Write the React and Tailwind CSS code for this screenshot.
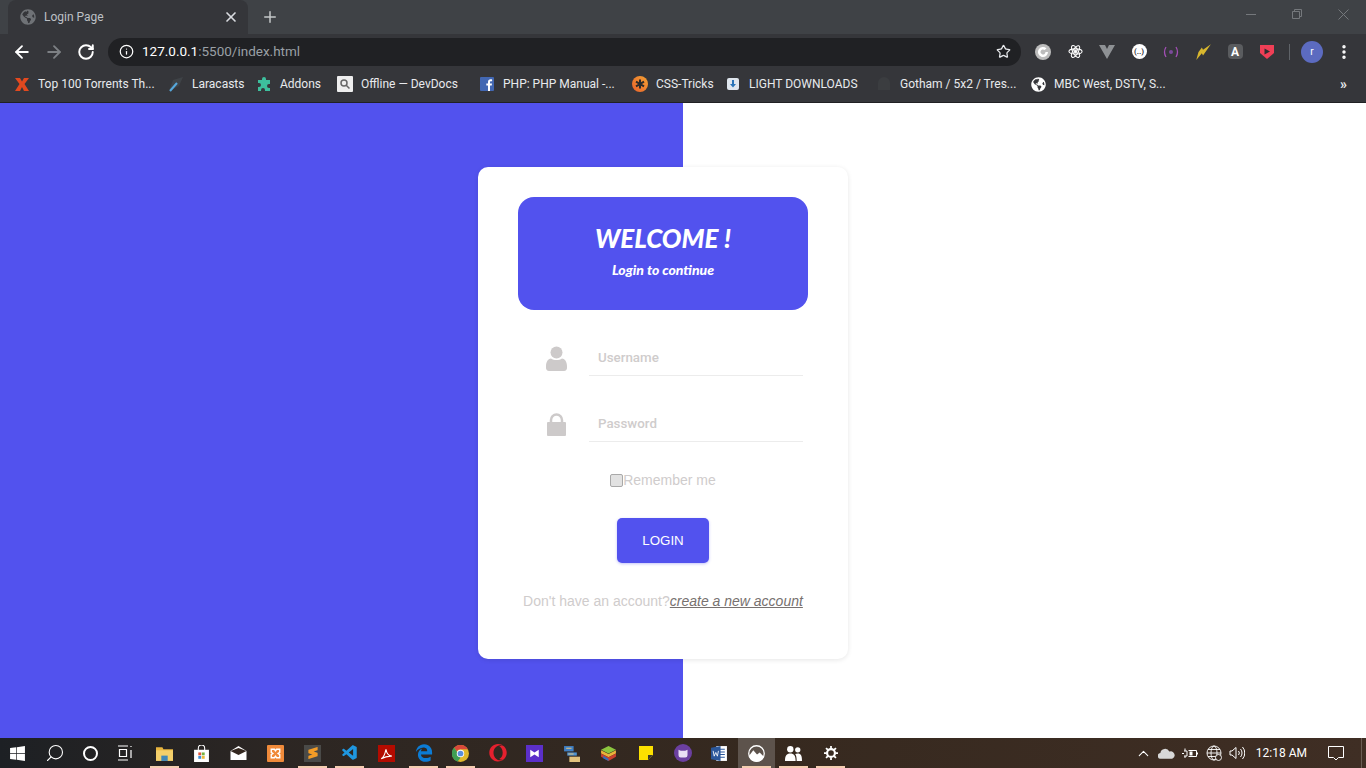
import { FaChrome, FaEdgeLegacy, FaGlobeAmericas, FaOpera, FaWindows } from 'react-icons/fa';
import { SiSublimetext } from 'react-icons/si';
import { VscVscode } from 'react-icons/vsc';
import { ArrowLeft, ArrowRight, ChevronUp, Info, MoreVertical, Plus, RotateCw, Search, Star, X } from 'lucide-react';

function XMark() {
  return (
    <svg viewBox="0 0 16 16" className="h-4 w-4">
      <path d="M1 2h5l2 3.500L10 2h5l-4.500 6 4.500 7H10l-2-4-2 4H1l4.500-7z" fill="#e2491f" />
    </svg>
  );
}

function Laracasts() {
  return (
    <svg viewBox="0 0 16 16" className="h-4 w-4">
      <path d="M15 1 5 4l-1 3-3 8 8-4 2-1z" fill="#3f4347" />
      <path d="M2 15 9 7" stroke="#56a8dc" strokeWidth="2" />
    </svg>
  );
}

function Puzzle() {
  return (
    <svg viewBox="0 0 16 16" className="h-4 w-4">
      <path d="M6 3a2 2 0 1 1 4 0v1h4v4h-1a2 2 0 1 0 0 4h1v3H9v-1a2 2 0 1 0-4 0v1H2v-4h1a2 2 0 1 0 0-4H2V4h4z" fill="#3dbf9d" />
    </svg>
  );
}

function DevDocs() {
  return (
    <svg viewBox="0 0 16 16" className="h-4 w-4">
      <rect width="16" height="16" rx="1" fill="#eeeeee" />
      <circle cx="7" cy="7" r="3" fill="none" stroke="#666" strokeWidth="1.500" />
      <path d="m9 9 3.500 3.500" stroke="#666" strokeWidth="1.500" />
    </svg>
  );
}

function Facebook() {
  return (
    <svg viewBox="0 0 16 16" className="h-4 w-4">
      <rect x="1" y="1" width="14" height="14" rx="1" fill="#4267b2" />
      <path d="M11 15V9.500h1.700l.3-2h-2V6.200c0-.6.2-1 1-1h1.100V3.400C12.700 3.300 12.200 3.300 11.600 3.300 10 3.300 9 4.200 9 6v1.500H7.300v2H9V15z" fill="#fff" />
    </svg>
  );
}

function CssTricks() {
  return (
    <svg viewBox="0 0 16 16" className="h-4 w-4">
      <defs>
        <linearGradient id="cssTricksFill" x1="0" y1="1" x2="1" y2="0">
          <stop offset="0" stopColor="#e8612c" />
          <stop offset="1" stopColor="#f4a233" />
        </linearGradient>
      </defs>
      <circle cx="8" cy="8" r="8" fill="url(#cssTricksFill)" />
      <path d="M8 3.500v9M4 5.700l8 4.600M12 5.700l-8 4.600" stroke="#2b2b2b" strokeWidth="2" />
    </svg>
  );
}

function Download() {
  return (
    <svg viewBox="0 0 12 12" className="h-3 w-3">
      <rect width="12" height="12" rx="2" fill="#dfe6ee" />
      <path d="M5 2h2v4h2L6 9.500 3 6h2z" fill="#2b74b8" />
    </svg>
  );
}

function Ghost() {
  return (
    <svg viewBox="0 0 16 16" className="h-4 w-4">
      <path d="M2 14V7a6 6 0 0 1 12 0v7z" fill="#3b3d40" />
    </svg>
  );
}

function Chrome() {
  return (
    <svg viewBox="0 0 16 16" className="h-[17px] w-[17px]">
      <circle cx="8" cy="8" r="8" fill="#e0b92c" />
      <path d="M8 0a8 8 0 0 1 7 4H8a4 4 0 0 0-3.500 2L2 2.300A8 8 0 0 1 8 0z" fill="#d9483b" />
      <path d="M2 2.300 4.500 6 8 12l-2.700 3.500A8 8 0 0 1 2 2.300z" fill="#3f9d53" />
      <circle cx="8" cy="8" r="3.500" fill="#fff" />
      <circle cx="8" cy="8" r="2.700" fill="#5a8fdc" />
    </svg>
  );
}

const bookmarks = [
  { label: 'Top 100 Torrents Th...', item: 'ml-[14px]', text: 'w-[114px]', icon: <XMark /> },
  { label: 'Laracasts', item: 'ml-[16px]', text: 'w-[48px]', icon: <Laracasts /> },
  { label: 'Addons', item: 'ml-[16px]', text: 'w-[41px]', icon: <Puzzle /> },
  { label: 'Offline — DevDocs', item: 'ml-[16px]', text: 'w-[101px]', icon: <DevDocs /> },
  { label: 'PHP: PHP Manual -...', item: 'ml-[17px]', text: 'w-[110px]', icon: <Facebook /> },
  { label: 'CSS-Tricks', item: 'ml-[19px]', text: 'w-[54px]', icon: <CssTricks /> },
  { label: 'LIGHT DOWNLOADS', item: 'ml-[15px]', text: 'w-[110px]', icon: <Download /> },
  { label: 'Gotham / 5x2 / Tres...', item: 'ml-[17px]', text: 'w-[113px]', icon: <Ghost /> },
  { label: 'MBC West, DSTV, S...', item: 'ml-[17px]', text: 'w-[110px]', icon: <FaGlobeAmericas className="h-[15px] w-[15px] text-white" /> },
];

const apps = [
  { on: true, icon: (
    <svg viewBox="0 0 16 16" className="h-[17px] w-[17px]">
      <path d="M0 2h6l1 2h9v2H0z" fill="#e8b53f" />
      <path d="M0 5h16v10H0z" fill="#f3cf6a" />
      <path d="M5 10h6v5H5z" fill="#3f87b8" />
    </svg>
  ) },
  { on: false, icon: (
    <svg viewBox="0 0 16 16" className="h-[17px] w-[17px]">
      <path d="M5 5V3a3 3 0 0 1 6 0v2" fill="none" stroke="#fff" />
      <path d="M1 4.500h14V16H1z" fill="#fff" />
      <path d="M5 7h2.700v2.700H5z" fill="#e0543a" />
      <path d="M8.300 7H11v2.700H8.300z" fill="#75b23f" />
      <path d="M5 10.300h2.700V13H5z" fill="#3a8ed8" />
      <path d="M8.300 10.300H11V13H8.300z" fill="#edb93a" />
    </svg>
  ) },
  { on: false, icon: (
    <svg viewBox="0 0 16 14" className="h-[14px] w-[17px]">
      <path d="M0 5 8 0l8 5v9H0z" fill="#fff" />
      <path d="M0 5 8 9l8-4-8-3z" fill="#33271f" />
    </svg>
  ) },
  { on: false, icon: (
    <svg viewBox="0 0 16 16" className="h-[17px] w-[17px]">
      <rect width="16" height="16" rx="1" fill="#f08a3a" />
      <path d="M4 4h3l1 1.500L9 4h3v3l-1.500 1L12 9v3H9L8 10.500 7 12H4V9l1.500-1L4 7z" fill="none" stroke="#fff" strokeWidth="1.300" />
    </svg>
  ) },
  { on: true, icon: (
    <div className="flex h-[17px] w-[17px] items-center justify-center bg-[#4a4a48]">
      <SiSublimetext className="h-3 w-3 text-[#f39c27]" />
    </div>
  ) },
  { on: true, icon: <VscVscode className="h-[18px] w-[18px] text-[#1f97e0]" /> },
  { on: false, icon: (
    <svg viewBox="0 0 16 16" className="h-[17px] w-[17px]">
      <rect width="16" height="16" fill="#b30b00" />
      <path d="M3 13c2-1 3.500-4 4.500-9 .5 4 2 6 5.500 6.500-3.500-.2-7 .8-10 2.500z" fill="none" stroke="#fff" strokeWidth="1.100" />
    </svg>
  ) },
  { on: true, icon: <FaEdgeLegacy className="h-[18px] w-[18px] text-[#0c7cd5]" /> },
  { on: true, icon: <Chrome /> },
  { on: false, icon: <FaOpera className="h-[18px] w-[18px] text-[#e5202e]" /> },
  { on: false, icon: (
    <svg viewBox="0 0 16 16" className="h-[17px] w-[17px]">
      <rect width="16" height="16" fill="#5b2fc9" />
      <path d="M4 4.500 8 7l4-2.500v7L8 9l-4 2.500z" fill="#fff" />
    </svg>
  ) },
  { on: false, icon: (
    <svg viewBox="0 0 16 16" className="h-[17px] w-[17px]">
      <path d="M1 1h9v5H1z" fill="#3f7fc4" />
      <path d="M4 7h9v3H4z" fill="#4f93d2" />
      <path d="M6 11h10v5H6z" fill="#e3c27d" />
      <path d="M3 3h5M5 8.500h5" stroke="#e3c27d" />
    </svg>
  ) },
  { on: false, icon: (
    <svg viewBox="0 0 16 16" className="h-[17px] w-[17px]">
      <path d="M8 1 15 4.500 8 8 1 4.500z" fill="#8cc63f" />
      <path d="M1 5v3l7 3.500L15 8V5L8 8.500z" fill="#e8b33a" />
      <path d="M1 8v3l7 4 7-4V8l-7 3.500z" fill="#c8402e" />
      <path d="M3 10v2.500L8 15v-2z" fill="#2f6fc0" />
    </svg>
  ) },
  { on: false, icon: (
    <svg viewBox="0 0 16 16" className="h-[16px] w-[16px]">
      <path d="M1 1h14v9l-5 5H1z" fill="#fce100" />
      <path d="M15 10h-5v5z" fill="#3a3a2a" />
    </svg>
  ) },
  { on: false, icon: (
    <svg viewBox="0 0 16 16" className="h-[18px] w-[18px]">
      <circle cx="8" cy="8" r="8" fill="#6b3fa0" />
      <path d="M4 5l2 1h4l2-1v5a2 2 0 0 1-2 2H6a2 2 0 0 1-2-2z" fill="#e8def5" />
    </svg>
  ) },
  { on: false, icon: (
    <svg viewBox="0 0 16 16" className="h-[17px] w-[17px]">
      <path d="M5 1h10v14H5z" fill="#fff" />
      <path d="M8 4h5M8 6.500h5M8 9h5M8 11.500h5" stroke="#2b579a" />
      <path d="M0 2.500 9 1v14l-9-1.500z" fill="#2b579a" />
      <path d="m2 5.500 1 5 1.500-3.500L6 10.500l1-5" fill="none" stroke="#fff" strokeWidth=".8" />
    </svg>
  ) },
  { on: true, active: true, icon: (
    <svg viewBox="0 0 16 16" className="h-[17px] w-[17px]">
      <circle cx="8" cy="8" r="7.300" fill="none" stroke="#fff" strokeWidth="1.200" />
      <path d="M1 10 5 5l3.500 4L11 7l4 4a7.300 7.300 0 0 1-14-1z" fill="#fff" />
    </svg>
  ) },
  { on: true, icon: (
    <svg viewBox="0 0 16 16" className="h-[17px] w-[17px]">
      <circle cx="5" cy="4" r="3" fill="#fff" />
      <circle cx="12" cy="4.500" r="2.500" fill="#fff" />
      <path d="M0 15c0-5 1.500-7 5-7s5 2 5 7zM11 15c0-3-.4-5-1.400-6.500 .7-.3 1.500-.5 2.400-.5 3 0 4 2 4 7z" fill="#fff" />
    </svg>
  ) },
  { on: true, icon: (
    <svg viewBox="0 0 16 16" className="h-[14px] w-[14px]">
      <circle cx="8" cy="8" r="4.500" fill="none" stroke="#fff" strokeWidth="2.500" />
      <path d="M8 0v3M8 13v3M0 8h3M13 8h3M2.300 2.300l2.200 2.200M11.500 11.500l2.200 2.200M13.700 2.300l-2.200 2.200M4.500 11.500l-2.200 2.200" stroke="#fff" strokeWidth="2" />
    </svg>
  ) },
];

const ToolbarCell = ({ children }) => (
  <div className="flex h-8 w-8 shrink-0 items-center justify-center">{children}</div>
);

const TrayCell = ({ children }) => (
  <div className="flex h-full w-[23.5px] shrink-0 items-center justify-center">{children}</div>
);

const BrowserChrome = () => (
  <header className="shrink-0 font-['Roboto','Noto_Sans',sans-serif]">
    {/* Tab strip */}
    <div className="flex h-[34px] bg-[#3f4246] pl-2">
      <div className="flex h-full w-[240px] items-center rounded-t-lg bg-[#35363a] pl-3 pr-[9px]">
        <FaGlobeAmericas className="h-4 w-4 shrink-0 text-[#6f7276]" />
        <span className="ml-2 flex-1 text-xs text-[#bdc1c6]">Login Page</span>
        <X className="h-4 w-4 text-[#dadce0]" strokeWidth={2.500} />
      </div>
      <div className="ml-[13px] flex items-center">
        <Plus className="h-[18px] w-[18px] text-[#c4c7c9]" strokeWidth={2} />
      </div>
      {/* Window buttons */}
      <div className="ml-auto flex h-full items-center pb-[6px] text-[#75787c]">
        <div className="flex w-[46px] justify-center">
          <div className="h-px w-[10px] bg-[#75787c]" />
        </div>
        <div className="flex w-[46px] justify-center">
          <svg viewBox="0 0 10 10" className="h-[10px] w-[10px]" fill="none" stroke="currentColor">
            <path d="M.5 2.500h7v7h-7zM2.500 2.500v-2h7v7h-2" />
          </svg>
        </div>
        <div className="flex w-[46px] justify-center">
          <svg viewBox="0 0 11 11" className="h-[11px] w-[11px]" fill="none" stroke="currentColor">
            <path d="m.5.500 10 10M10.500.500l-10 10" />
          </svg>
        </div>
      </div>
    </div>

    {/* Toolbar */}
    <div className="flex h-[35px] items-center bg-[#35363a] pl-[6px]">
      <ToolbarCell><ArrowLeft className="h-5 w-5 text-white" strokeWidth={2.200} /></ToolbarCell>
      <ToolbarCell><ArrowRight className="h-5 w-5 text-[#7d8084]" strokeWidth={2.200} /></ToolbarCell>
      <ToolbarCell><RotateCw className="h-[18px] w-[18px] text-white" strokeWidth={2.600} /></ToolbarCell>
      <div className="ml-[6px] flex h-7 w-[913px] items-center rounded-full bg-[#202124] pl-[11px] pr-[10px]">
        <Info className="h-[15px] w-[15px] text-white" strokeWidth={2} />
        <span className="ml-[8px] flex-1 text-[13.5px] text-[#9aa0a6]">
          <span className="text-white">127.0.0.1</span>:5500/index.html
        </span>
        <Star className="h-[15px] w-[15px] text-[#e8eaed]" strokeWidth={2} />
      </div>
      <div className="ml-[6px] flex items-center">
        <ToolbarCell>
          <svg viewBox="0 0 16 16" className="h-4 w-4">
            <circle cx="8" cy="8" r="8" fill="#bdbdbd" />
            <path d="M11.500 4.500A5 5 0 1 0 13 8h-2.500A2.500 2.500 0 1 1 9.500 6z" fill="#fff" />
          </svg>
        </ToolbarCell>
        <ToolbarCell>
          <svg viewBox="0 0 16 16" className="h-[15px] w-[15px]" fill="none" stroke="#fff" strokeWidth="1.100">
            <ellipse cx="8" cy="8" rx="7" ry="2.800" />
            <ellipse cx="8" cy="8" rx="7" ry="2.800" transform="rotate(60 8 8)" />
            <ellipse cx="8" cy="8" rx="7" ry="2.800" transform="rotate(120 8 8)" />
            <circle cx="8" cy="8" r="1.300" fill="#fff" />
          </svg>
        </ToolbarCell>
        <ToolbarCell>
          <svg viewBox="0 0 16 14" className="h-[14px] w-[16px]">
            <path d="M0 0h6l2 4 2-4h6L8 14z" fill="#8e9194" />
          </svg>
        </ToolbarCell>
        <ToolbarCell>
          <div className="flex h-[15px] w-[15px] items-center justify-center rounded-full bg-white text-[8px] font-bold leading-none text-[#35363a]">
            {'(..)'}
          </div>
        </ToolbarCell>
        <ToolbarCell>
          <svg viewBox="0 0 16 12" className="h-3 w-4" fill="none" stroke="#a24fb5" strokeWidth="1.300">
            <path d="M3 1Q0 6 3 11M13 1q3 5 0 10" />
            <circle cx="8" cy="6" r="2" fill="#7a4a9a" stroke="none" />
          </svg>
        </ToolbarCell>
        <ToolbarCell>
          <svg viewBox="0 0 16 16" className="h-[18px] w-[18px]">
            <path d="M15 1 8 6l-1-2-3 4-2 7 5-6 1 2z" fill="#d8b72e" />
          </svg>
        </ToolbarCell>
        <ToolbarCell>
          <div className="flex h-[15px] w-[15px] items-center justify-center rounded-sm bg-[#5a5c5f] text-[12px] font-bold leading-none text-white">
            A
          </div>
        </ToolbarCell>
        <ToolbarCell>
          <svg viewBox="0 0 16 16" className="h-4 w-4">
            <path d="M1 1h14v8l-7 6-7-6z" fill="#ef3f56" />
            <path d="M5.500 4.500 11 7.500l-5.500 3z" fill="#2e2e30" />
          </svg>
        </ToolbarCell>
      </div>
      <div className="ml-[6px] h-4 w-px bg-[#5f6368]" />
      <div className="ml-[6px] flex h-8 w-8 items-center justify-center">
        <div className="flex h-[22px] w-[22px] items-center justify-center rounded-full bg-[#5c6bc0] text-[10px] text-white">
          r
        </div>
      </div>
      <ToolbarCell><MoreVertical className="h-[18px] w-[18px] text-white" strokeWidth={2.600} /></ToolbarCell>
    </div>

    {/* Bookmarks bar */}
    <div className="flex h-[34px] items-center border-b border-[#202124] bg-[#35363a] pb-[3px]">
      {bookmarks.map((b) => (
        <div key={b.label} className={`flex shrink-0 items-center ${b.item}`}>
          <div className="flex w-4 shrink-0 justify-center">{b.icon}</div>
          <span className={`ml-2 whitespace-nowrap text-xs text-[#e8eaed] ${b.text}`}>{b.label}</span>
        </div>
      ))}
      <span className="ml-auto mr-[19px] text-sm font-bold leading-none text-[#e8eaed]">»</span>
    </div>
  </header>
);

const UserIcon = () => (
  <svg viewBox="0 0 21 25" className="h-[25px] w-[21px]" fill="#cdcaca">
    <circle cx="10.500" cy="6.500" r="6" />
    <path d="M0 20c0-4.500 2.500-7.500 5-7.500 1.500 1 3.500 1.500 5.500 1.500s4-.5 5.500-1.500c2.500 0 5 3 5 7.500v2c0 1.500-1 3-3 3H3c-2 0-3-1.500-3-3z" />
  </svg>
);

const LockIcon = () => (
  <svg viewBox="0 0 19 23" className="h-[23px] w-[19px]">
    <path d="M4 10V7a5.500 5.500 0 0 1 11 0v3" fill="none" stroke="#cdcaca" strokeWidth="2.500" />
    <path d="M1 9h17a1 1 0 0 1 1 1v12a1 1 0 0 1-1 1H1a1 1 0 0 1-1-1V10a1 1 0 0 1 1-1z" fill="#cdcaca" />
  </svg>
);

const Field = ({ icon, placeholder, type }) => (
  <div className="flex h-9 w-[290px] items-stretch">
    <div className="flex w-[71px] shrink-0 items-center justify-center pl-[5px]">{icon}</div>
    <div className="flex w-[214px] items-center border-b border-[#ececec] pl-[9px]">
      <input
        type={type}
        placeholder={placeholder}
        className="w-full bg-transparent font-['Roboto',sans-serif] text-[13.33px] font-medium outline-none placeholder:text-[#cfcccc]"
      />
    </div>
  </div>
);

const LoginCard = () => (
  <div className="flex h-[492px] w-[370px] flex-col items-center rounded-[10px] bg-white pt-[30px] shadow-[0_1px_5px_rgba(0,0,0,0.1)] font-['Liberation_Sans',Arial,sans-serif]">
    <div className="flex h-[113px] w-[290px] flex-col items-center rounded-2xl bg-[#5252ee] pt-[25px] text-white">
      <h1 className="font-['Lato',sans-serif] text-[26px] font-black italic leading-[32px]">WELCOME !</h1>
      <p className="mt-[6px] font-['Lato',sans-serif] text-[14px] font-black italic leading-[20px]">Login to continue</p>
    </div>

    <div className="mt-[30px]">
      <Field icon={<UserIcon />} placeholder="Username" type="text" />
    </div>
    <div className="mt-[30px]">
      <Field icon={<LockIcon />} placeholder="Password" type="password" />
    </div>

    <label className="mt-[30px] flex h-4 items-center text-sm text-[#cfcccc]">
      <input type="checkbox" className="m-0 h-[13px] w-[13px] appearance-none rounded-[2px] border border-[#a9a9a9] bg-[#e2e2e2]" />
      Remember me
    </label>

    <button className="mt-[30px] h-[45px] w-[92px] rounded-[5px] bg-[#5252ee] text-[13.33px] text-white shadow-[0_1px_3px_rgba(82,82,238,0.35)]">
      LOGIN
    </button>

    <p className="mt-[28px] text-sm text-[#cfcccc]">
      Don't have an account?
      <a href="#" className="italic text-[#77716f] underline">create a new account</a>
    </p>
  </div>
);

const Taskbar = () => (
  <footer className="flex h-[30px] shrink-0 items-stretch bg-[linear-gradient(90deg,#1d2024_0%,#2c2623_20%,#36291f_55%,#3f2e24_100%)] text-white">
    <div className="flex w-[35px] items-center justify-center"><FaWindows className="h-[17px] w-[17px]" /></div>
    <div className="ml-[2px] flex w-[36px] items-center justify-center">
      <Search className="h-5 w-5 -scale-x-100" strokeWidth={1.300} />
    </div>
    <div className="flex w-[34px] items-center justify-center">
      <div className="h-[15px] w-[15px] rounded-full border-2 border-white" />
    </div>
    <div className="flex w-[36px] items-center justify-center">
      <svg viewBox="0 0 16 16" className="h-4 w-4" fill="none" stroke="#fff">
        <path d="M1 1h10M1 15h10M2.500 4.500h7v7h-7zM14 1v1M14 5v8" strokeWidth="1.200" />
      </svg>
    </div>
    <div className="ml-[3px] flex">
      {apps.map((app, i) => (
        <div key={i} className={`relative flex w-[37px] items-center justify-center ${app.active ? 'bg-[#5d534c]' : ''}`}>
          {app.icon}
          {app.on && <div className="absolute bottom-0 left-[4px] h-[2px] w-[29px] bg-[#f4cdb0]" />}
        </div>
      ))}
    </div>
    <div className="ml-auto flex items-stretch">
      <TrayCell><ChevronUp className="h-[17px] w-[17px] text-white" strokeWidth={1.500} /></TrayCell>
      <TrayCell>
        <svg viewBox="0 0 18 11" className="h-[11px] w-[17px]">
          <path d="M3 11a3 3 0 0 1-.5-6A5 5 0 0 1 12 3.500 4 4 0 0 1 15 11z" fill="#d8d8d8" />
        </svg>
      </TrayCell>
      <TrayCell>
        <svg viewBox="0 0 16 12" className="h-3 w-4" fill="none" stroke="#fff">
          <path d="M6.500 3.500h8v6h-8M15.500 5.500v2M0 6.500h2M2 4h3v5H2M3 1.500V4M3 9v2" />
          <path d="M7.500 4.500h3v4h-3z" fill="#fff" stroke="none" />
        </svg>
      </TrayCell>
      <TrayCell>
        <svg viewBox="0 0 16 16" className="h-4 w-4" fill="none" stroke="#fff" strokeWidth=".9">
          <circle cx="8" cy="8" r="7" />
          <ellipse cx="8" cy="8" rx="3" ry="7" />
          <path d="M1 8h14M2 4.500h12M2 11.500h12" />
          <circle cx="12.500" cy="12.500" r="3" fill="#3a2b21" />
        </svg>
      </TrayCell>
      <TrayCell>
        <svg viewBox="0 0 16 14" className="h-[14px] w-4" fill="none" stroke="#fff">
          <path d="M1 5h2l4-3.500v11L3 9H1zM9.500 5a3 3 0 0 1 0 4M11.500 3a6 6 0 0 1 0 8M13.500 1a9 9 0 0 1 0 12" />
        </svg>
      </TrayCell>
      <div className="ml-[6px] flex w-[52px] items-center justify-end whitespace-nowrap font-['Roboto',sans-serif] text-xs">12:18 AM</div>
      <div className="ml-[10px] flex w-[37px] items-center justify-center">
        <svg viewBox="0 0 16 16" className="h-4 w-4" fill="none" stroke="#fff">
          <path d="M.5 1.500h15v11h-5L8 15l-2.500-2.500h-5z" />
        </svg>
      </div>
      <div className="ml-[7px] w-px bg-[#6a5d54]" />
      <div className="w-[4px]" />
    </div>
  </footer>
);

export default function App() {
  return (
    <div className="flex h-screen w-full flex-col overflow-hidden bg-white">
      <BrowserChrome />
      <main className="flex flex-1 justify-center bg-[linear-gradient(90deg,#5252ee_50%,#ffffff_50%)] pr-[40px] pt-[64px]">
        <LoginCard />
      </main>
      <Taskbar />
    </div>
  );
}
